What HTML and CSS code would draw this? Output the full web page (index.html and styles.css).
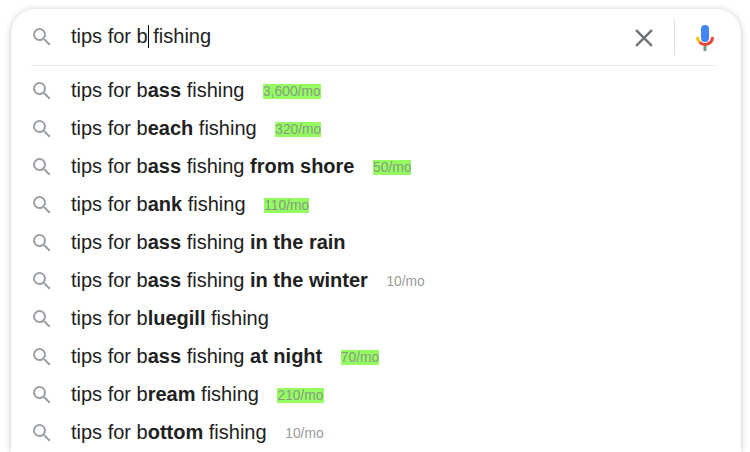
FILE: index.html
```html
<!DOCTYPE html>
<html lang="en">
<head>
    <meta charset="UTF-8">
    <title>tips for b fishing</title>
    <link rel="stylesheet" href="styles.css">
</head>
<body>
    <svg class="defs" width="0" height="0">
        <symbol id="lens" viewBox="0 0 24 24">
            <path d="M15.5 14h-.79l-.28-.27A6.471 6.471 0 0 0 16 9.5 6.5 6.5 0 1 0 9.5 16c1.61 0 3.09-.59 4.23-1.57l.27.28v.79l5 4.99L20.49 19l-4.99-5zm-6 0C7.01 14 5 11.99 5 9.5S7.01 5 9.5 5 14 7.01 14 9.5 11.99 14 9.5 14z"/>
        </symbol>
    </svg>

    <div class="search-card">
        <div class="search-bar">
            <svg class="lens"><use href="#lens"/></svg>
            <div class="query">tips for b<span class="caret"></span> fishing</div>
            <svg class="clear" viewBox="0 0 24 24"><path d="M19 6.41 17.59 5 12 10.59 6.41 5 5 6.41 10.59 12 5 17.59 6.41 19 12 13.41 17.59 19 19 17.59 13.41 12z"/></svg>
            <span class="divider"></span>
            <svg class="mic" viewBox="0 0 18 26">
                <rect x="5" y="0" width="8" height="17" rx="4" fill="#4285f4"/>
                <path d="M1.5 12A7.5 7.5 0 0 0 3.7 17.3" fill="none" stroke="#fbbc05" stroke-width="3"/>
                <path d="M3.7 17.3A7.5 7.5 0 0 0 16.5 12" fill="none" stroke="#ea4335" stroke-width="3"/>
                <rect x="7.5" y="21" width="3" height="5" fill="#6f9f80"/>
            </svg>
        </div>

        <ul class="suggestions">
            <li><svg class="lens"><use href="#lens"/></svg><span class="text">tips for b<b>ass</b> fishing</span><span class="volume hot">3,600/mo</span></li>
            <li><svg class="lens"><use href="#lens"/></svg><span class="text">tips for b<b>each</b> fishing</span><span class="volume hot">320/mo</span></li>
            <li><svg class="lens"><use href="#lens"/></svg><span class="text">tips for b<b>ass</b> fishing <b>from shore</b></span><span class="volume hot">50/mo</span></li>
            <li><svg class="lens"><use href="#lens"/></svg><span class="text">tips for b<b>ank</b> fishing</span><span class="volume hot">110/mo</span></li>
            <li><svg class="lens"><use href="#lens"/></svg><span class="text">tips for b<b>ass</b> fishing <b>in the rain</b></span></li>
            <li><svg class="lens"><use href="#lens"/></svg><span class="text">tips for b<b>ass</b> fishing <b>in the winter</b></span><span class="volume">10/mo</span></li>
            <li><svg class="lens"><use href="#lens"/></svg><span class="text">tips for b<b>luegill</b> fishing</span></li>
            <li><svg class="lens"><use href="#lens"/></svg><span class="text">tips for b<b>ass</b> fishing <b>at night</b></span><span class="volume hot">70/mo</span></li>
            <li><svg class="lens"><use href="#lens"/></svg><span class="text">tips for b<b>ream</b> fishing</span><span class="volume hot">210/mo</span></li>
            <li><svg class="lens"><use href="#lens"/></svg><span class="text">tips for b<b>ottom</b> fishing</span><span class="volume">10/mo</span></li>
        </ul>
    </div>
</body>
</html>
```

FILE: styles.css
```css
* {
    margin: 0;
    padding: 0;
    box-sizing: border-box;
}

html, body {
    height: 452px;
    overflow: hidden;
}

body {
    background: #fff;
    font-family: "Liberation Sans", Arial, sans-serif;
    color: #212121;
    padding: 9px 9px 0 11px;
}

.defs {
    display: block;
    height: 0;
}

/* Card, runs off the bottom of the window */
.search-card {
    height: 443px;
    background: #fff;
    border-radius: 24px 24px 0 0;
    box-shadow: 0 1px 6px rgba(32, 33, 36, 0.28);
}

.search-bar {
    display: flex;
    align-items: center;
    height: 57px;
    padding: 0 27px 2px 19px;
    position: relative;
}

/* Line under the search bar */
.search-bar::after {
    content: "";
    position: absolute;
    left: 20px;
    right: 25px;
    bottom: 0;
    border-bottom: 1px solid #e8eaed;
}

.lens {
    width: 24px;
    height: 24px;
    fill: #9aa0a6;
    flex: none;
}

.query {
    flex: 1;
    margin: 0 0 2px 17px;
    font-size: 20px;
    line-height: 24px;
    color: #222;
}

.caret {
    display: inline-block;
    width: 1px;
    height: 23px;
    margin-right: -1px;
    background: #000;
    vertical-align: -5px;
}

.clear {
    width: 30px;
    height: 30px;
    margin-top: 2px;
    fill: #70757a;
    flex: none;
}

.divider {
    width: 1px;
    height: 36px;
    margin: 0 21px 0 15px;
    background: #dfe1e5;
    flex: none;
}

.mic {
    width: 18px;
    height: 26px;
    margin-top: 2px;
    flex: none;
}

/* Suggestions */
.suggestions {
    list-style: none;
    padding-top: 5px;
}

.suggestions li {
    display: flex;
    align-items: center;
    height: 38px;
    padding-left: 19px;
}

.suggestions .lens {
    margin-top: 2px;
}

.text {
    margin-left: 17px;
    font-size: 20px;
    white-space: pre;
}

.volume {
    margin: 3px 0 0 18.6px;
    font-size: 13.8px;
    line-height: 15px;
    color: #9a9a9a;
}

.volume.hot {
    background: #93fd62;
    color: #8a9a80;
}
```
